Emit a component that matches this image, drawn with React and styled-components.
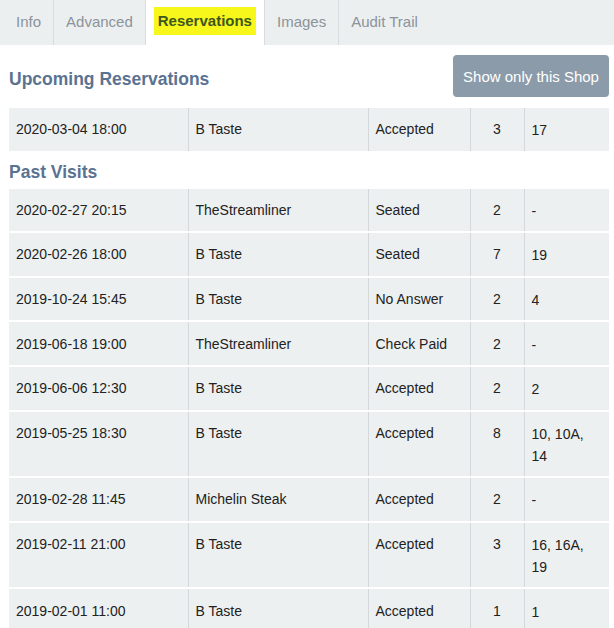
import React from 'react';
import styled, { createGlobalStyle } from 'styled-components';

const GlobalStyle = createGlobalStyle`
  html, body {
    margin: 0;
    padding: 0;
    background: #ffffff;
    font-family: 'Liberation Sans', Arial, sans-serif;
  }
`;

const TABS = ['Info', 'Advanced', 'Reservations', 'Images', 'Audit Trail'];
const ACTIVE = 'Reservations';

const upcoming = [['2020-03-04 18:00', 'B Taste', 'Accepted', '3', '17']];

const past = [
  ['2020-02-27 20:15', 'TheStreamliner', 'Seated', '2', '-'],
  ['2020-02-26 18:00', 'B Taste', 'Seated', '7', '19'],
  ['2019-10-24 15:45', 'B Taste', 'No Answer', '2', '4'],
  ['2019-06-18 19:00', 'TheStreamliner', 'Check Paid', '2', '-'],
  ['2019-06-06 12:30', 'B Taste', 'Accepted', '2', '2'],
  ['2019-05-25 18:30', 'B Taste', 'Accepted', '8', '10, 10A, 14'],
  ['2019-02-28 11:45', 'Michelin Steak', 'Accepted', '2', '-'],
  ['2019-02-11 21:00', 'B Taste', 'Accepted', '3', '16, 16A, 19'],
  ['2019-02-01 11:00', 'B Taste', 'Accepted', '1', '1'],
];

const App = () => {
  return (
    <Page>
      <GlobalStyle />
      <TabBar>
        {TABS.map((t) => (
          <Tab key={t} active={t === ACTIVE}>
            {t === ACTIVE ? <Highlight>{t}</Highlight> : t}
          </Tab>
        ))}
      </TabBar>

      <Content>
        <HeaderRow>
          <SectionTitle>Upcoming Reservations</SectionTitle>
          <ShopButton>Show only this Shop</ShopButton>
        </HeaderRow>
        <ReservationTable rows={upcoming} />

        <SectionTitle small>Past Visits</SectionTitle>
        <ReservationTable rows={past} />
      </Content>
    </Page>
  );
};

const ReservationTable = ({ rows }) => (
  <Table>
    <colgroup>
      <col style={{ width: 179 }} />
      <col style={{ width: 180 }} />
      <col style={{ width: 102 }} />
      <col style={{ width: 54 }} />
      <col style={{ width: 85 }} />
    </colgroup>
    <tbody>
      {rows.map((r, i) => (
        <tr key={i}>
          <Cell>{r[0]}</Cell>
          <Cell>{r[1]}</Cell>
          <Cell>{r[2]}</Cell>
          <Cell center>{r[3]}</Cell>
          <Cell last>{r[4]}</Cell>
        </tr>
      ))}
    </tbody>
  </Table>
);

const Page = styled.div`
  width: 614px;
  min-height: 628px;
  background: #fff;
`;

const TabBar = styled.div`
  display: flex;
  height: 45px;
  background: #eceff0;
`;

const Tab = styled.div`
  display: flex;
  align-items: center;
  padding: 0 ${(p) => (p.active ? '8px' : '12px')} 3px;
  font-size: 15px;
  color: #8b939b;
  background: ${(p) => (p.active ? '#ffffff' : 'transparent')};
  border-right: 1px solid #d9dcde;
  &:first-child {
    padding-left: 16px;
  }
  &:last-child {
    border-right: none;
  }
`;

const Highlight = styled.span`
  display: inline-block;
  background: #f7f71c;
  color: #40561f;
  font-weight: bold;
  padding: 5px 4px 6px;
`;

const Content = styled.div`
  padding: 0 5px 0 9px;
`;

const HeaderRow = styled.div`
  display: flex;
  justify-content: space-between;
  align-items: flex-start;
  padding-top: 10px;
  margin-bottom: 8px;
`;

const SectionTitle = styled.h2`
  margin: ${(p) => (p.small ? '10px 0 7px' : '0')};
  padding-top: ${(p) => (p.small ? '0' : '3px')};
  font-size: 17.5px;
  line-height: ${(p) => (p.small ? '19px' : '42px')};
  font-weight: bold;
  color: #5a7392;
`;

const ShopButton = styled.button`
  width: 156px;
  height: 42px;
  border: none;
  border-radius: 4px;
  background: #8b9baa;
  color: #fff;
  font-family: 'Liberation Sans', Arial, sans-serif;
  font-size: 15px;
  padding: 0;
  cursor: pointer;
`;

const Table = styled.table`
  width: 600px;
  table-layout: fixed;
  border-collapse: collapse;
  font-size: 14px;
  color: #222;
  tr {
    background: #edf0f1;
    border-bottom: 2px solid #fff;
  }
`;

const Cell = styled.td`
  line-height: 22px;
  vertical-align: top;
  text-align: ${(p) => (p.center ? 'center' : 'left')};
  border-right: ${(p) => (p.last ? 'none' : '1px solid #d5d8da')};
  padding: ${(p) => (p.last ? '11.3px 7px 9.3px' : '10.3px 7px')};
`;

export default App;
